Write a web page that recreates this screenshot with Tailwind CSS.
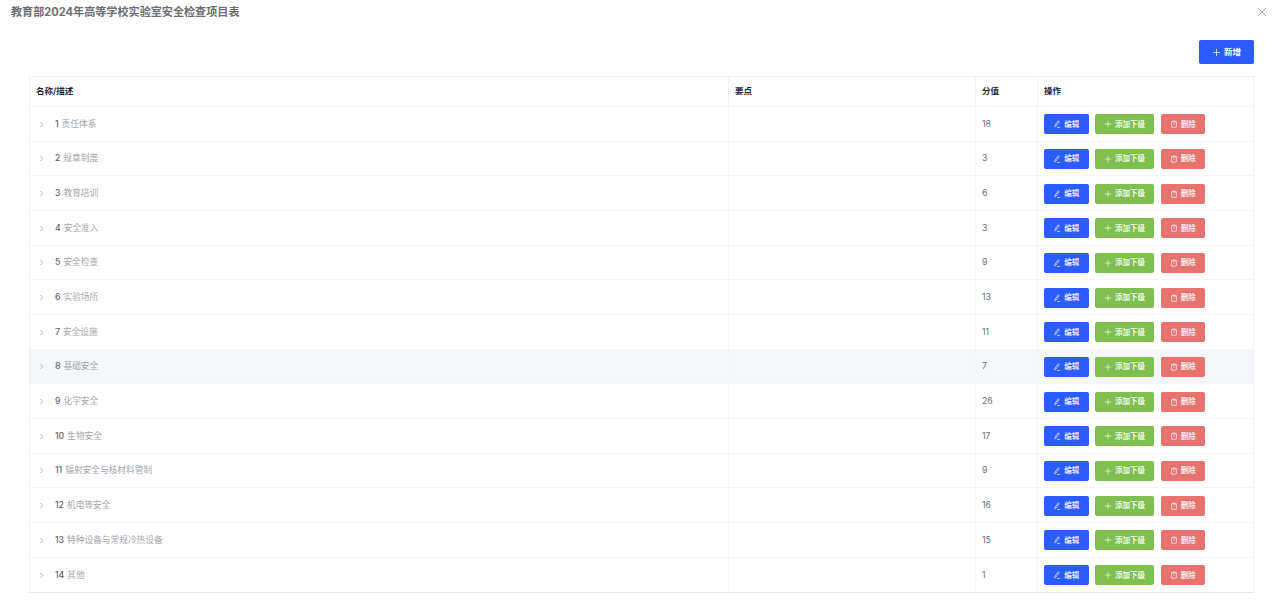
<!DOCTYPE html>
<html lang="zh-CN">
<head>
    <meta charset="UTF-8">
    <script src="https://cdn.jsdelivr.net/npm/@tailwindcss/browser@4"></script>
    <title>安全检查项目表</title>
</head>
<body class="bg-white font-['Inter','Noto_Sans_CJK_SC',sans-serif] overflow-hidden">
    <div class="h-[603px] overflow-hidden">
        <div class="flex items-center justify-between pl-[11px] pr-[13px] h-[24px]">
            <h1 class="text-[11.1px] leading-[14px] font-bold text-[#6b6e75]">教育部2024年高等学校实验室安全检查项目表</h1>
            <svg class="w-[10px] h-[10px] text-[#8a8c90]" viewBox="0 0 10 10" fill="none" stroke="currentColor" stroke-width="0.8"><path d="M1 1l8 8M9 1l-8 8"/></svg>
        </div>
        <div class="flex justify-end pr-[26px] pt-[16px] h-[52px]">
            <button class="w-[55px] h-[24px] rounded-[2px] bg-[#2b5cff] text-white text-[8.5px] font-semibold flex items-center justify-center gap-[3px]">
                <svg class="w-[9px] h-[9px]" viewBox="0 0 10 10" fill="none" stroke="currentColor" stroke-width="0.8"><path d="M5 1v8M1 5h8"/></svg>
                新增
            </button>
        </div>
        <div class="ml-[29px] w-[1225px] border border-[#f0f1f4] border-b-[#e6e8ee]">
            <div class="grid grid-cols-[698px_247px_62px_1fr] h-[30px] items-center text-[8.5px] font-bold text-[#26282c] border-b border-[#f2f3f5]">
                <div class="pl-[6px]">名称/描述</div>
                <div class="pl-[6px] h-full flex items-center border-l border-[#f2f3f5]">要点</div>
                <div class="pl-[6px] h-full flex items-center border-l border-[#f2f3f5]">分值</div>
                <div class="pl-[6px] h-full flex items-center border-l border-[#f2f3f5]">操作</div>
            </div>
            <div id="rows"></div>
        </div>
    </div>
    <script>
      const items = [
        [1, '责任体系', 18], [2, '规章制度', 3], [3, '教育培训', 6], [4, '安全准入', 3],
        [5, '安全检查', 9], [6, '实验场所', 13], [7, '安全设施', 11], [8, '基础安全', 7],
        [9, '化学安全', 26], [10, '生物安全', 17], [11, '辐射安全与核材料管制', 9],
        [12, '机电等安全', 16], [13, '特种设备与常规冷热设备', 15], [14, '其他', 1]
      ];
      const rows = document.getElementById('rows');
      items.forEach(([no, name, score]) => {
        const row = document.createElement('div');
        row.className = 'grid grid-cols-[698px_247px_62px_1fr] h-[34.67px] items-center text-[8.7px] text-[#6b6e75] border-b border-[#f4f5f7] last:border-b-0 ' + (no === 8 ? 'bg-[#f5f6fa]' : '');
        row.innerHTML = `
          <div class="pl-[8px] pt-[1px] flex items-center">
            <svg class="w-[7px] h-[7px] text-[#9a9ca1] mr-[10px]" viewBox="0 0 8 8" fill="none" stroke="currentColor" stroke-width="0.8"><path d="M2.5 1l3 3-3 3"/></svg>
            <span class="font-medium text-[#62656b] mr-[3px]">${no}</span>
            <span class="text-[#a4a6ab]">${name}</span>
          </div>
          <div class="h-full border-l border-[#f4f5f7]"></div>
          <div class="pl-[6px] pt-[1px] h-full flex items-center border-l border-[#f4f5f7]">${score}</div>
          <div class="pl-[6px] pt-[1px] h-full flex items-center gap-[6.5px] border-l border-[#f4f5f7] text-white text-[7.5px] font-medium">
            <button class="w-[44.5px] h-[20px] rounded-[2px] bg-[#2b5cff] flex items-center justify-center gap-[3px]">
              <svg class="w-[8px] h-[8px]" viewBox="0 0 10 10" fill="none" stroke="currentColor" stroke-width="0.8"><path d="M2.5 6.5L6.5 1l1.4 1L3.8 7.6 2.2 8.4zM5 9.3h4"/></svg>编辑
            </button>
            <button class="w-[59px] h-[20px] rounded-[2px] bg-[#7fbf4f] flex items-center justify-center gap-[3px]">
              <svg class="w-[8px] h-[8px]" viewBox="0 0 10 10" fill="none" stroke="currentColor" stroke-width="0.8"><path d="M5 1v8M1 5h8"/></svg>添加下级
            </button>
            <button class="w-[44.5px] h-[20px] rounded-[2px] bg-[#e5736f] flex items-center justify-center gap-[3px]">
              <svg class="w-[8px] h-[8px]" viewBox="0 0 10 10" fill="none" stroke="currentColor" stroke-width="0.8"><path d="M1.2 2.5h7.6M3.5 2.5V1.2h3v1.3M2 2.5v6.5h6V2.5M4 5.2h2"/></svg>删除
            </button>
          </div>`;
        rows.appendChild(row);
      });
    </script>
</body>
</html>
